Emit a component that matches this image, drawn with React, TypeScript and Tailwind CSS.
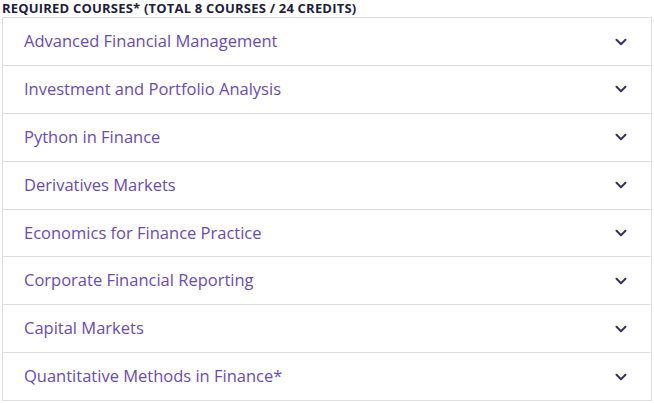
const COURSES = [
  "Advanced Financial Management",
  "Investment and Portfolio Analysis",
  "Python in Finance",
  "Derivatives Markets",
  "Economics for Finance Practice",
  "Corporate Financial Reporting",
  "Capital Markets",
  "Quantitative Methods in Finance*",
];

function Chevron() {
  return (
    <svg width="12" height="8" viewBox="0 0 12 8" fill="none" className="text-[#3b2f6b]">
      <path d="M1.5 1.75 6 6.25l4.5-4.5" stroke="currentColor" strokeWidth="2" strokeLinecap="round" strokeLinejoin="round" />
    </svg>
  );
}

export default function App() {
  return (
    <div className="w-[654px] h-[403px] bg-white overflow-hidden" style={{ fontFamily: "'Open Sans', sans-serif" }}>
      <h3 className="pl-[2px] text-[13px] leading-[16px] font-bold uppercase tracking-[0.2px] text-[#1f1d3d]">
        Required Courses* (Total 8 Courses / 24 Credits)
      </h3>
      <div className="ml-[2px] mt-[1px] w-[650px] border border-[#dedede]">
        {COURSES.map((name, i) => (
          <button
            key={name}
            className={`flex w-full items-center justify-between pl-[21px] pr-[24px] text-left ${
              i > 0 ? "h-[47.86px] border-t border-[#dedede]" : "h-[47px]"
            }`}
          >
            <span className="text-[16.5px] text-[#6a4bb5]">{name}</span>
            <Chevron />
          </button>
        ))}
      </div>
    </div>
  );
}
